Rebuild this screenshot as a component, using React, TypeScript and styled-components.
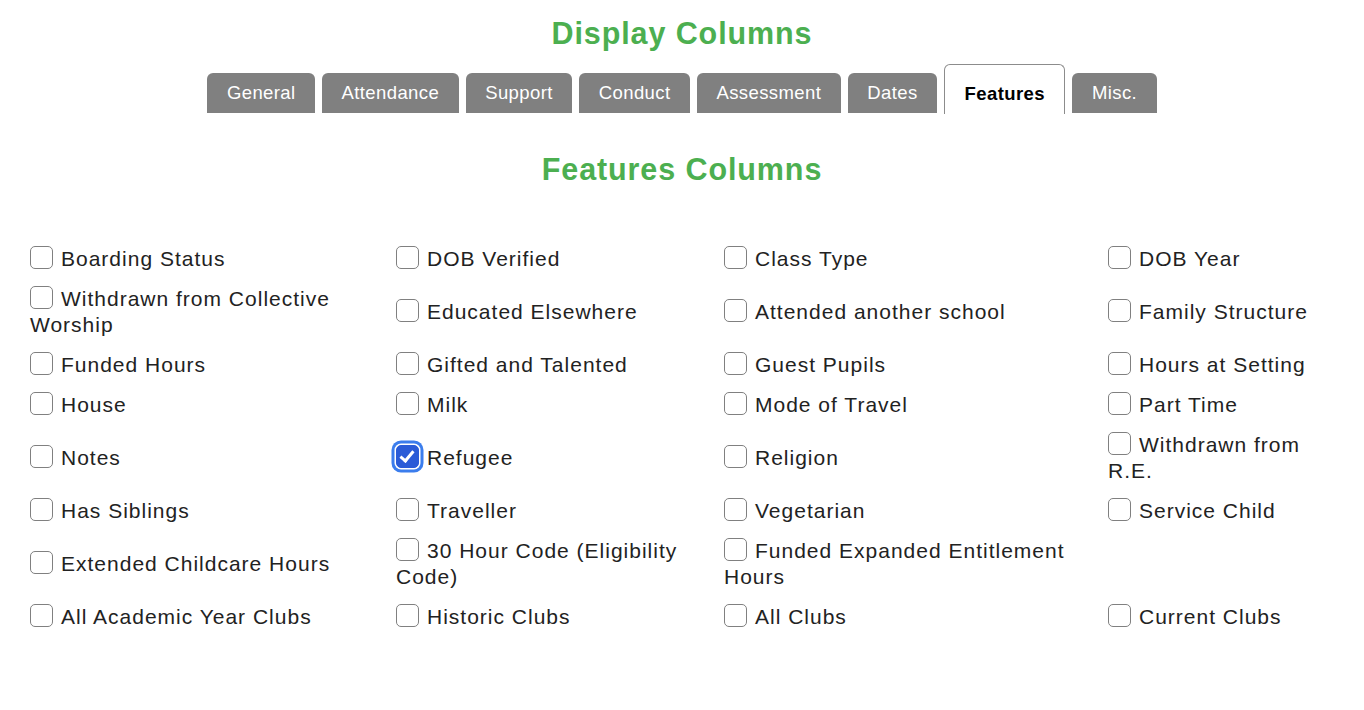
import React, { FC, useState } from "react";
import styled, { createGlobalStyle } from "styled-components";

const GlobalStyle = createGlobalStyle`
  body {
    margin: 0;
    background: #ffffff;
    font-family: "Liberation Sans", Arial, sans-serif;
    color: #222222;
  }
`;

const Page = styled.div`
  display: flex;
  flex-direction: column;
  align-items: center;
  padding-top: 15px;
`;

const Title = styled.h1<{ $gap?: number }>`
  margin: ${(p) => p.$gap ?? 0}px 0 0;
  font-size: 30.5px;
  line-height: 36px;
  font-weight: bold;
  letter-spacing: 0.9px;
  color: #4caf50;
  text-align: center;
`;

const TabBar = styled.div`
  display: flex;
  align-items: flex-end;
  gap: 7px;
  margin-top: 13px;
`;

const Tab = styled.button<{ $active?: boolean }>`
  font-family: "Liberation Sans", Arial, sans-serif;
  font-size: 18.5px;
  letter-spacing: 0.4px;
  line-height: 40px;
  padding: ${(p) => (p.$active ? "9px 19.5px 0" : "0 19.5px")};
  margin: 0 0 ${(p) => (p.$active ? 0 : 1)}px;
  border: ${(p) => (p.$active ? "1px solid #8c8c8c" : "none")};
  border-bottom: none;
  border-radius: 6px 6px 0 0;
  background: ${(p) => (p.$active ? "#ffffff" : "#808080")};
  color: ${(p) => (p.$active ? "#000000" : "#ffffff")};
  font-weight: ${(p) => (p.$active ? "bold" : "normal")};
  cursor: pointer;
`;

const Grid = styled.div`
  display: grid;
  grid-template-columns: 366px 328px 384px 226px;
  align-items: center;
  align-self: flex-start;
  margin: 53px 0 0 30px;
`;

const Cell = styled.label`
  display: block;
  padding: 6px 0 8px;
  font-size: 21px;
  line-height: 26px;
  letter-spacing: 1px;
  color: #222222;
`;

const Box = styled.input`
  appearance: none;
  position: relative;
  display: inline-block;
  box-sizing: border-box;
  width: 23px;
  height: 23px;
  margin: -3px 8px 0 0;
  vertical-align: -2.5px;
  border: 1.5px solid #808080;
  border-radius: 5px;
  background: #ffffff;
  cursor: pointer;

  &:checked {
    background: #2a5bd7;
    border-color: #2a5bd7;
    box-shadow: 0 0 0 1.5px #ffffff, 0 0 0 4.5px #3b7ded;
  }

  &:checked::after {
    content: "";
    position: absolute;
    left: 6px;
    top: 2px;
    width: 5px;
    height: 11px;
    border-right: 3px solid #ffffff;
    border-bottom: 3px solid #ffffff;
    transform: rotate(40deg);
  }
`;

const tabs = [
  "General",
  "Attendance",
  "Support",
  "Conduct",
  "Assessment",
  "Dates",
  "Features",
  "Misc.",
];

const rows: string[][] = [
  ["Boarding Status", "DOB Verified", "Class Type", "DOB Year"],
  [
    "Withdrawn from Collective Worship",
    "Educated Elsewhere",
    "Attended another school",
    "Family Structure",
  ],
  ["Funded Hours", "Gifted and Talented", "Guest Pupils", "Hours at Setting"],
  ["House", "Milk", "Mode of Travel", "Part Time"],
  ["Notes", "Refugee", "Religion", "Withdrawn from R.E."],
  ["Has Siblings", "Traveller", "Vegetarian", "Service Child"],
  [
    "Extended Childcare Hours",
    "30 Hour Code (Eligibility Code)",
    "Funded Expanded Entitlement Hours",
    "",
  ],
  ["All Academic Year Clubs", "Historic Clubs", "All Clubs", "Current Clubs"],
];

const App: FC = () => {
  const [active, setActive] = useState("Features");
  const [checked, setChecked] = useState<string[]>(["Refugee"]);

  const toggle = (name: string) =>
    setChecked((prev) =>
      prev.includes(name) ? prev.filter((n) => n !== name) : [...prev, name]
    );

  return (
    <>
      <GlobalStyle />
      <Page>
        <Title>Display Columns</Title>
        <TabBar>
          {tabs.map((t) => (
            <Tab key={t} $active={t === active} onClick={() => setActive(t)}>
              {t}
            </Tab>
          ))}
        </TabBar>
        <Title $gap={37}>{active.replace(".", "")} Columns</Title>
        <Grid>
          {rows.flat().map((name, i) =>
            name ? (
              <Cell key={name}>
                <Box
                  type="checkbox"
                  checked={checked.includes(name)}
                  onChange={() => toggle(name)}
                />
                {name}
              </Cell>
            ) : (
              <Cell key={`empty-${i}`} />
            )
          )}
        </Grid>
      </Page>
    </>
  );
};

export default App;
